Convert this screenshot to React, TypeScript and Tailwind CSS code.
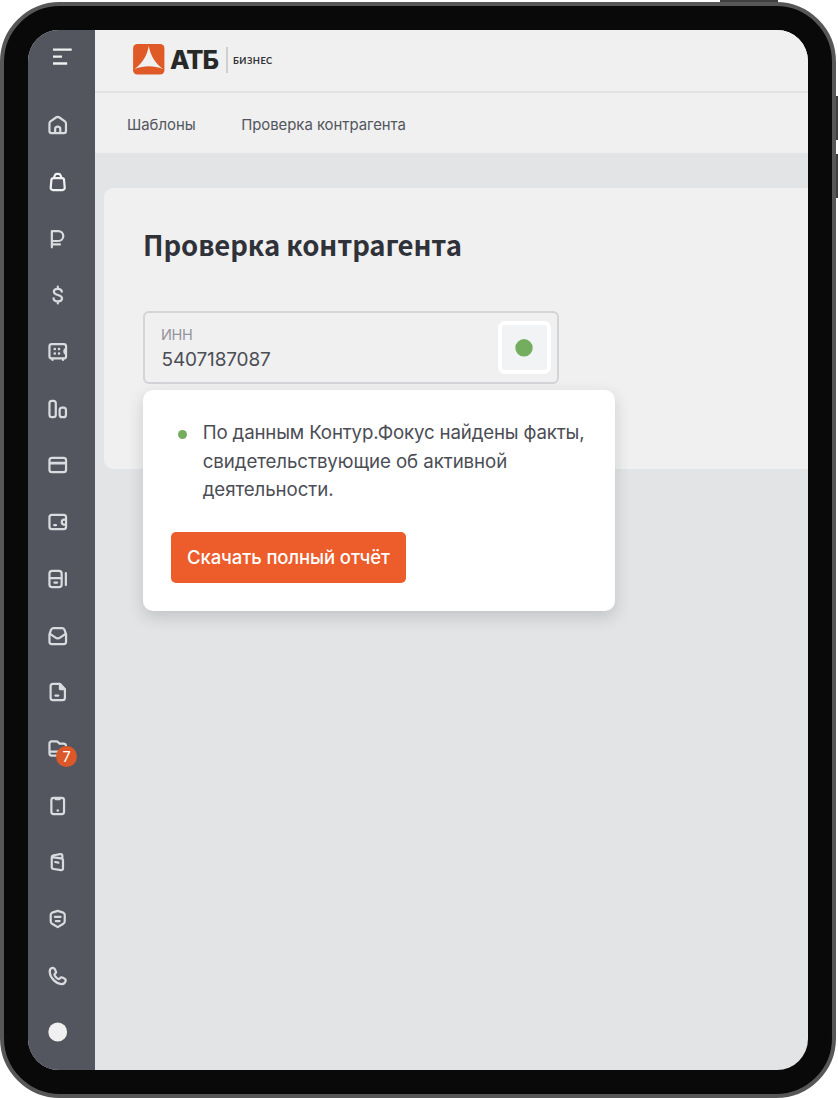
import type { ReactNode } from "react";

const icons: { name: string; color: string; art: ReactNode }[] = [
  { name: "home", color: "#d9dbde", art: (
    <>
      <path d="M3.400 10.400c0-.9.4-1.600 1.100-2.100l5.700-4.100c1.100-.8 2.500-.8 3.600 0l5.700 4.100c.7.500 1.100 1.200 1.100 2.100v7.900c0 1.300-.9 2.200-2.200 2.200H5.600c-1.300 0-2.200-.9-2.200-2.200z" />
      <path d="M9.300 20v-3.700a2.700 2.700 0 0 1 5.400 0V20" />
    </>
  ) },
  { name: "bag", color: "#f2f2f2", art: (
    <>
      <path d="M7.600 8h8.900c1.200 0 2 .7 2.100 1.900l.7 8c.1 1.400-.9 2.500-2.300 2.500H7c-1.400 0-2.400-1.100-2.300-2.500l.7-8C5.600 8.700 6.400 8 7.600 8z" />
      <path d="M8.200 7.500 9 5.200c.3-1 1.200-1.600 2.200-1.600h1.600c1 0 1.900.6 2.200 1.600l.8 2.300" />
    </>
  ) },
  { name: "ruble", color: "#d9dbde", art: (
    <path d="M5.900 3.700v17M5.900 3.700h6.700a5.200 5.200 0 0 1 0 10.400H6M6 17.700h8.300" />
  ) },
  { name: "dollar", color: "#d9dbde", art: (
    <path d="M16.300 8.500C16 6.900 14.400 5.600 12.100 5.600c-2.400 0-4.100 1.200-4.100 3.100 0 4.400 8.500 2.100 8.500 6.700 0 2-1.900 3.200-4.300 3.200-2.500 0-4.300-1.300-4.500-3.200M12.100 3.300v2.300M12.100 18.600v2.200" />
  ) },
  { name: "safe", color: "#d9dbde", art: (
    <>
      <rect x="3.400" y="3.800" width="17.300" height="14.900" rx="2.400" />
      <path d="M6.600 19v1.300M17.500 19v1.300M20.200 8.800a3 3 0 0 0 0 5" />
      <path d="M8.900 8.800h.1M13.300 8.800h.1M8.900 13.600h.1M13.300 13.600h.1" strokeWidth="2.600" />
    </>
  ) },
  { name: "chart", color: "#d9dbde", art: (
    <>
      <rect x="3.400" y="3.500" width="6.600" height="17" rx="2.500" />
      <rect x="14" y="10.600" width="6.600" height="9.900" rx="2.600" />
    </>
  ) },
  { name: "card", color: "#d9dbde", art: (
    <>
      <rect x="3.400" y="4.500" width="17.300" height="15" rx="2.600" />
      <path d="M4 10h16" strokeWidth="2.700" />
    </>
  ) },
  { name: "wallet", color: "#d9dbde", art: (
    <>
      <rect x="3.400" y="4.500" width="17.300" height="15" rx="2.600" />
      <path d="M20.500 9.500h-1.700a2.600 2.600 0 0 0 0 5.200h1.700M8.400 15.300h1.800" />
    </>
  ) },
  { name: "terminal", color: "#d9dbde", art: (
    <>
      <rect x="3.400" y="3.500" width="12.700" height="17" rx="2.800" />
      <path d="M3.800 11.100h12M8.500 15.700h2.900M20.500 5.800v12.500" />
    </>
  ) },
  { name: "inbox", color: "#d9dbde", art: (
    <>
      <path d="M3.400 10.300 5 5.700c.4-1.300 1.100-2 2.400-2h9.300c1.300 0 2 .7 2.400 2l1.600 4.600V18c0 1.400-.9 2.400-2.300 2.400H5.700c-1.400 0-2.300-1-2.300-2.400z" />
      <path d="m4 9.800 5.700 3.900c1.600 1.100 3.100 1.100 4.700 0l5.800-3.900" />
    </>
  ) },
  { name: "document", color: "#d9dbde", art: (
    <>
      <path d="M7 3.500h7.300l5.200 5.600V18c0 1.500-1 2.500-2.500 2.500H7.100c-1.500 0-2.500-1-2.500-2.500V6C4.600 4.500 5.600 3.500 7 3.500z" />
      <path d="M14.300 3.800v5.100h4.700zM9.600 15.700h3" fill="currentColor" />
    </>
  ) },
  { name: "folder", color: "#d9dbde", art: (
    <path d="M20.600 8.400c-.3-1.300-1.300-1.900-2.600-1.900h-3.200c-.8 0-1.300-.4-1.800-.9l-.5-.6c-.5-.6-1.200-.9-2-.9H5.900c-1.500 0-2.500 1-2.500 2.500v9.900c0 1.500 1 2.500 2.500 2.500H13M3.800 14.700h9" />
  ) },
  { name: "phone", color: "#d9dbde", art: (
    <>
      <rect x="5.400" y="3.500" width="13.200" height="17" rx="2.400" />
      <path d="M10 4.700h4M12 16.600h.1" strokeWidth="2.600" />
    </>
  ) },
  { name: "book", color: "#d9dbde", art: (
    <path d="m6.100 7 9.600 1.200c1.200.2 1.800.8 1.800 2v8.500c0 1.200-.8 1.900-2 1.700l-7.700-1.100c-1.300-.2-2-1-2-2.200V7.400c0-1.400.7-2.200 2-2.400l6.900-1.200c1.300-.2 2.100.5 2.100 1.700V8M9.400 12l3.300.7" />
  ) },
  { name: "shield", color: "#d9dbde", art: (
    <path d="m12 3.500 5.800 1.900c1 .4 1.500 1.100 1.500 2.100v6.800c0 1.100-.5 2-1.400 2.600L12 20.500l-5.900-3.600c-.9-.6-1.400-1.500-1.400-2.600V7.500c0-1 .5-1.700 1.500-2.100zM9 9.700h6M10 14.200h4" />
  ) },
  { name: "call", color: "#d9dbde", art: (
    <path d="M5.800 3.700c1.200-.5 2.500 0 3.100 1.100l1 1.900c.5.900.2 2.200-.7 2.800-.8.600-.7 1.500.1 2.700.8 1.300 2 2.300 3 2.800 1 .5 1.500.3 2-.6.6-.9 1.600-1.200 2.600-.8l2 .9c1.100.5 1.700 1.700 1.300 2.900-.6 1.900-2.200 3.200-4.300 3-5.900-.6-11.700-6.300-12.200-12.300-.2-2 .5-3.700 2.100-4.400z" />
  ) },
  { name: "avatar", color: "#f0f0f0", art: <circle cx="12" cy="12" r="9.800" fill="currentColor" stroke="none" /> },
];

function Sidebar() {
  return (
    <aside className="w-[67px] shrink-0 bg-[#53565f]">
      <svg className="ml-[20px] mt-[15px] block h-6 w-7" viewBox="0 0 28 24" fill="none" stroke="#f0f0f0" strokeWidth="2.300">
        <path d="M5 4.700h18.700M5 11.600h9M5 18.500h14.200" />
      </svg>
      <nav className="mt-[28px] flex flex-col">
        {icons.map(({ name, color, art }) => (
          <div key={name} className="flex h-[56.7px] items-center justify-center pr-[7.600px]">
            <div className="relative h-6 w-6">
              <svg className="h-6 w-6" viewBox="-.2 -.5 25 25" fill="none" stroke="currentColor" strokeWidth="2.300" strokeLinecap="round" strokeLinejoin="round" style={{ color }}>
                {art}
              </svg>
              {name === "folder" && (
                <span className="absolute left-[10.500px] top-[9.500px] flex h-[21px] w-[21px] items-center justify-center rounded-full bg-[#dc5828] text-[14.500px] leading-none text-white">7</span>
              )}
            </div>
          </div>
        ))}
      </nav>
    </aside>
  );
}

function Logo() {
  return (
    <div className="flex h-[31px] items-center">
      <svg className="h-[31px] w-[32px]" viewBox="0 0 32 31">
        <rect x=".1" y=".1" width="31.300" height="30.500" rx="4.200" fill="#e05a28" />
        <path d="M15.800 1.800C17.300 11 22 19.500 30 25C20.800 21.400 10.800 21.400 1.600 25C9.600 19.500 14.300 11 15.800 1.800z" fill="#f0f0f0" />
      </svg>
      <span className="ml-[5px] w-[50px] font-[Inter] text-[25.500px] font-extrabold leading-[31px] tracking-[-1.100px] text-[#272828]">АТБ</span>
      <span className="ml-[6px] h-[26px] w-[1.500px] bg-[#cfcfcf]" />
      <span className="ml-[5.500px] mt-[2px] font-[Lato] text-[9.300px] font-bold leading-none tracking-[0.450px] text-[#333435]">БИЗНЕС</span>
    </div>
  );
}

function ReportPopup() {
  return (
    <div className="absolute -left-[1.800px] top-[77.500px] h-[221px] w-[472px] rounded-[10px] bg-white pl-[28px] pt-[28px] shadow-[0_6px_16px_rgba(40,45,50,0.180)]">
      <div className="flex">
        <span className="ml-[7px] mt-[12px] h-[9px] w-[9px] shrink-0 rounded-full bg-[#74ad5d]" />
        <p className="ml-[15.500px] mt-[1px] whitespace-nowrap text-[18.700px] leading-[28.500px] text-[#4b4d55]">
          <span className="tracking-[-0.160px]">По данным Контур.Фокус найдены факты,</span>
          <br />
          <span className="tracking-[-0.080px]">свидетельствующие об активной</span>
          <br />
          <span className="tracking-[-0.080px]">деятельности.</span>
        </p>
      </div>
      <button className="mt-[27.500px] block h-[51px] w-[234.500px] whitespace-nowrap rounded-[5px] bg-[#ed5c2b] text-[18.500px] font-medium tracking-[-0.120px] text-white">
        Скачать полный отчёт
      </button>
    </div>
  );
}

function InnField() {
  return (
    <div className="relative mt-[47px] flex h-[73.500px] w-[415.500px] justify-between rounded-[6px] border-2 border-[#d3d4d8] pl-[16px] pr-[6px]">
      <div className="pt-[12.500px]">
        <div className="text-[14.500px] leading-[20px] tracking-[-0.300px] text-[#93959d]">ИНН</div>
        <div className="ml-[0.500px] mt-[2px] text-[19px] leading-[26px] tracking-[-0.150px] text-[#4b4d55]">5407187087</div>
      </div>
      <button className="mt-[8.500px] flex h-[53px] w-[53px] items-center justify-center rounded-[7px] border-4 border-white bg-[#f1f3f5]" aria-label="Статус">
        <svg className="h-[18px] w-[18px]" viewBox="0 0 18 18">
          <circle cx="9" cy="8.800" r="8.700" fill="#74ad5d" />
        </svg>
      </button>
      <ReportPopup />
    </div>
  );
}

export default function App() {
  return (
    <div className="relative h-[1098px] w-[838px] overflow-hidden bg-white pt-[2px] font-[Inter,sans-serif]">
      <span className="absolute left-[720px] top-0 h-[3px] w-[58px] bg-[#404040]" />
      <span className="absolute left-[835px] top-[96px] h-[44px] w-[3px] bg-[#404040]" />
      <span className="absolute left-[835px] top-[154px] h-[44px] w-[3px] bg-[#404040]" />
      <div className="relative h-[1096px] w-[836px] rounded-[60px] border-4 border-[#575757] bg-[#090909] p-[24px]">
        <div className="flex h-full overflow-hidden rounded-[31px] bg-[#e3e4e6]">
          <Sidebar />
          <main className="min-w-0 flex-1">
            <header className="h-[63px] border-b-2 border-[#e3e3e3] bg-[#f0f0f0] pl-[38px] pt-[14px]">
              <Logo />
            </header>
            <nav className="flex h-[60px] items-center gap-[45.500px] whitespace-nowrap bg-[#f0f0f0] pl-[32px] pt-[4px] text-[14.900px] text-[#53555e]">
              <a>Шаблоны</a>
              <a className="tracking-[-0.030px]">Проверка контрагента</a>
            </nav>
            <section className="ml-[8.500px] mt-[34.500px] h-[281.500px] rounded-l-[9px] bg-[#f0f0f0] pl-[39.500px] pt-[36px]">
              <h1 className="h-[40px] whitespace-nowrap font-['Noto_Sans_CJK_SC',sans-serif] text-[27.500px] font-bold leading-[40px] tracking-[-0.100px] text-[#303239]">Проверка контрагента</h1>
              <InnField />
            </section>
          </main>
        </div>
      </div>
    </div>
  );
}
